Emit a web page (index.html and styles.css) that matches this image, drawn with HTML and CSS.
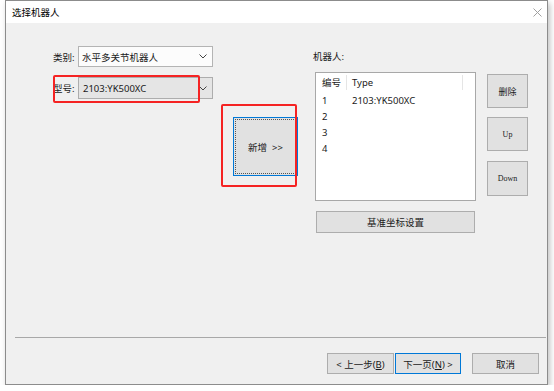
FILE: index.html
```html
<!DOCTYPE html>
<html lang="zh">
<head>
  <meta charset="UTF-8" />
  <title>选择机器人</title>
  <link rel="stylesheet" href="styles.css">
</head>
<body>

  <div class="window">
    <div class="titlebar">
      <span class="title">选择机器人</span>
      <svg class="close" width="9" height="9" viewBox="0 0 9 9"><path d="M0.5 0.5 L8.5 8.5 M8.5 0.5 L0.5 8.5" stroke="#a0a0a0" stroke-width="1" fill="none"/></svg>
    </div>

    <div class="main">
      <div class="col-left">
        <div class="field">
          <label>类别:</label>
          <div class="combo combo-white">
            <span>水平多关节机器人</span>
            <svg class="arrow" width="8" height="5" viewBox="0 0 8 5"><path d="M0.5 0.5 L4 4 L7.5 0.5" stroke="#444" fill="none"/></svg>
          </div>
        </div>
        <div class="field field-type">
          <label>型号:</label>
          <div class="combo combo-gray">
            <span>2103:YK500XC</span>
            <svg class="arrow" width="8" height="5" viewBox="0 0 8 5"><path d="M0.5 0.5 L4 4 L7.5 0.5" stroke="#444" fill="none"/></svg>
          </div>
        </div>
      </div>

      <div class="col-mid">
        <button class="btn btn-add"><span class="focus">新增&nbsp; &gt;&gt;</span></button>
      </div>

      <div class="col-list">
        <div class="list-label">机器人:</div>
        <div class="listview">
          <div class="lv-head">
            <span class="c1">编号</span><span class="c2">Type</span><span class="c3"></span>
          </div>
          <div class="lv-row"><span class="c1">1</span><span class="c2">2103:YK500XC</span></div>
          <div class="lv-row"><span class="c1">2</span><span class="c2"></span></div>
          <div class="lv-row"><span class="c1">3</span><span class="c2"></span></div>
          <div class="lv-row"><span class="c1">4</span><span class="c2"></span></div>
        </div>
        <button class="btn btn-base">基准坐标设置</button>
      </div>

      <div class="col-right">
        <button class="btn btn-side btn-del">删除</button>
        <button class="btn btn-side btn-up">Up</button>
        <button class="btn btn-side btn-down">Down</button>
      </div>

      <div class="mark mark-type"></div>
      <div class="mark mark-add"></div>
    </div>

    <div class="footer">
      <div class="sep"></div>
      <div class="footer-buttons">
        <button class="btn btn-foot">&lt; 上一步(<u>B</u>)</button>
        <button class="btn btn-foot btn-default">下一页(<u>N</u>) &gt;</button>
        <button class="btn btn-foot btn-cancel">取消</button>
      </div>
    </div>
  </div>

</body>
</html>
```

FILE: styles.css
```css
body {
  margin: 0;
  background: #fff;
  font-family: "Noto Sans", "Noto Sans CJK SC", sans-serif;
  font-size: 9.5px;
  color: #1a1a1a;
}
.window {
  margin-left: 5px;
  width: 543px;
  height: 385px;
  box-sizing: border-box;
  border: 1px solid #8c8c8c;
  background: #f0f0f0;
  box-shadow: 2px 3px 6px rgba(0,0,0,0.25);
  display: flex;
  flex-direction: column;
}
.titlebar {
  height: 22px;
  background: #fff;
  display: flex;
  align-items: center;
  padding-left: 6px;
  padding-right: 5px;
}
.title {
  font-size: 9.5px;
  color: #000;
}
.close {
  margin-left: auto;
}
.main {
  flex: 1;
  position: relative;
  display: flex;
  align-items: flex-start;
}

/* left column */
.col-left {
  margin-left: 47px;
  margin-top: 23px;
  width: 160px;
}
.field {
  display: flex;
  align-items: center;
}
.field label {
  width: 25px;
}
.field-type {
  margin-top: 10px;
}
.combo {
  width: 135px;
  height: 21px;
  box-sizing: border-box;
  border: 1px solid #b4b4b4;
  display: flex;
  align-items: center;
  padding-left: 3px;
  padding-right: 5px;
}
.combo-white {
  background: #fcfcfc;
}
.combo-gray {
  height: 22px;
  background: #e5e5e5;
  border-color: #adadad;
  padding-left: 4px;
}
.arrow {
  margin-left: auto;
}

/* buttons */
.btn {
  font-family: inherit;
  font-size: 9.5px;
  color: #1a1a1a;
  background: #e1e1e1;
  border: 1px solid #adadad;
  padding: 0;
  box-sizing: border-box;
  display: block;
}
.col-mid {
  margin-left: 20px;
  margin-top: 94px;
}
.btn-add {
  width: 65px;
  height: 59px;
  border-color: #0078d7;
  padding: 1px;
}
.focus {
  display: flex;
  align-items: center;
  justify-content: center;
  height: 100%;
  box-sizing: border-box;
  border: 1px dotted #555;
}

/* robot list */
.col-list {
  margin-left: 15px;
  margin-top: 27px;
  width: 163px;
}
.list-label {
  height: 14px;
  line-height: 14px;
}
.listview {
  margin-top: 8px;
  margin-left: 2px;
  width: 161px;
  height: 129px;
  box-sizing: border-box;
  border: 1px solid #a8a8a8;
  background: #fff;
}
.lv-head, .lv-row {
  display: flex;
  align-items: center;
}
.lv-head {
  height: 19px;
}
.lv-row {
  height: 16px;
}
.c1 {
  width: 31px;
  padding-left: 6px;
  box-sizing: border-box;
}
.c2 {
  width: 116px;
  padding-left: 5px;
  box-sizing: border-box;
}
.lv-head .c1, .lv-head .c2 {
  border-right: 1px solid #e5e5e5;
  height: 15px;
  line-height: 15px;
}
.btn-base {
  margin-top: 10px;
  margin-left: 3px;
  width: 159px;
  height: 22px;
}

/* side buttons */
.col-right {
  margin-left: 11px;
  margin-top: 51px;
  display: flex;
  flex-direction: column;
}
.btn-side {
  width: 41px;
  height: 34px;
  font-family: "Liberation Serif", "Noto Sans CJK SC", serif;
  font-size: 8px;
}
.btn-del {
  font-family: "Noto Sans CJK SC", sans-serif;
  font-size: 9px;
}
.btn-up {
  margin-top: 9px;
}
.btn-down {
  margin-top: 10px;
  height: 35px;
}

/* annotation marks */
.mark {
  position: absolute;
  border: 2px solid #f52323;
  border-radius: 2px;
  box-sizing: border-box;
}
.mark-type {
  left: 47px;
  top: 52px;
  width: 147px;
  height: 28px;
}
.mark-add {
  left: 215px;
  top: 81px;
  width: 76px;
  height: 83px;
}

/* footer */
.footer {
  height: 47px;
  box-sizing: border-box;
}
.sep {
  margin-left: 9px;
  margin-right: 1px;
  border-top: 1px solid #a8a8a8;
}
.footer-buttons {
  display: flex;
  justify-content: flex-end;
  padding-top: 15px;
  padding-right: 8px;
}
.btn-foot {
  width: 67px;
  height: 21px;
}
.btn-default {
  width: 66px;
  margin-left: 1px;
  border-color: #0078d7;
}
.btn-cancel {
  margin-left: 11px;
}
```
